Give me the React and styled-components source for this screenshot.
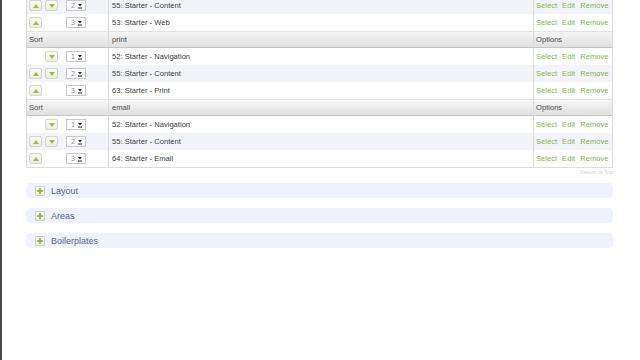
import React from "react";
import styled, { createGlobalStyle } from "styled-components";

const Global = createGlobalStyle`
  html, body { margin: 0; padding: 0; background: #fff; }
  body { font-family: "Liberation Sans", Arial, sans-serif; overflow: hidden; }
`;

const Page = styled.div`
  height: 360px;
  border-left: 2px solid #4a4a4a;
  padding-left: 24px;
  width: 587px;
  overflow: hidden;
`;

const Table = styled.div`
  margin-top: -4px;
  width: 587px;
  border: 1px solid #dcdcdc;
  box-sizing: border-box;
`;

const Row = styled.div`
  display: grid;
  grid-template-columns: 81px 425px 79px;
  height: 17px;
  background: ${(p) => (p.$alt ? "#f3f4fa" : "#fff")};
  font-size: 7.6px;
  color: #3c3c3c;
`;

const HeadRow = styled(Row)`
  background: linear-gradient(#f6f6f6, #e0e0e0);
  border-top: 1px solid #e4e4e4;
  border-bottom: 1px solid #c6c6c6;
  height: 15px;
  color: #4a4a4a;
  box-sizing: content-box;
`;

const Cell = styled.div`
  display: flex;
  align-items: center;
  gap: ${(p) => p.$gap || 0}px;
  padding-left: ${(p) => p.$pl || 3}px;
  border-left: ${(p) => (p.$divider ? "1px solid #dcdcdc" : "none")};
  white-space: nowrap;
`;

const SortCell = styled(Cell)`
  padding-left: 2px;
  gap: 3px;
`;

const ArrowBtn = styled.span`
  width: 13px;
  height: 11px;
  box-sizing: border-box;
  border: 1px solid #d6d6cc;
  border-radius: 2px;
  background: linear-gradient(#fbfbf6, #ececdf);
  display: flex;
  align-items: center;
  justify-content: center;
  visibility: ${(p) => (p.$hidden ? "hidden" : "visible")};
`;

const Picker = styled.span`
  margin-left: 5px;
  width: 20px;
  height: 11px;
  box-sizing: border-box;
  border: 1px solid #c8c8c8;
  background: #fff;
  display: flex;
  align-items: center;
  justify-content: space-between;
  padding: 0 1px 0 4px;
  font-size: 7px;
  color: #888;
`;

const DropMark = styled.span`
  width: 8px;
  height: 8px;
  display: flex;
  align-items: center;
  justify-content: center;
`;

const Action = styled.span`
  color: #8ab54e;
`;

const Under = styled.div`
  display: flex;
  justify-content: flex-end;
  font-size: 5.5px;
  color: #cfcfcf;
  height: 11px;
  padding-top: 1px;
  box-sizing: border-box;
`;

const Panels = styled.div`
  margin-top: 4px;
  display: flex;
  flex-direction: column;
  gap: 10px;
`;

const Panel = styled.div`
  height: 15px;
  border-radius: 5px;
  background: #f0f2fb;
  display: flex;
  align-items: center;
  padding-left: 9px;
  gap: 6px;
  font-size: 9px;
  color: #5465a2;
`;

const PlusBox = styled.span`
  width: 10px;
  height: 10px;
  box-sizing: border-box;
  border: 1px solid #cfcfc4;
  border-radius: 1px;
  background: linear-gradient(#fbfbf4, #ebebdc);
  display: flex;
  align-items: center;
  justify-content: center;
`;

const Tri = ({ up }) => (
  <svg width="6" height="4" viewBox="0 0 6 4">
    <polygon points={up ? "0,4 6,4 3,0" : "0,0 6,0 3,4"} fill="#9bbb52" />
  </svg>
);

const Drop = () => (
  <svg width="6" height="6" viewBox="0 0 6 6">
    <polygon points="1,1 5,1 3,3.5" fill="#222" />
    <rect x="1" y="4.5" width="4" height="1" fill="#222" />
  </svg>
);

const Plus = () => (
  <svg width="6" height="6" viewBox="0 0 6 6">
    <rect x="2.2" y="0" width="1.6" height="6" fill="#86b043" />
    <rect x="0" y="2.2" width="6" height="1.6" fill="#86b043" />
  </svg>
);

const ItemRow = ({ idx, total, name, alt }) => (
  <Row $alt={alt}>
    <SortCell>
      <ArrowBtn $hidden={idx === 1}>
        <Tri up />
      </ArrowBtn>
      <ArrowBtn $hidden={idx === total}>
        <Tri />
      </ArrowBtn>
      <Picker>
        {idx}
        <DropMark>
          <Drop />
        </DropMark>
      </Picker>
    </SortCell>
    <Cell $divider>{name}</Cell>
    <Cell $divider $gap={5} $pl={2}>
      <Action>Select</Action>
      <Action>Edit</Action>
      <Action>Remove</Action>
    </Cell>
  </Row>
);

const Header = ({ label }) => (
  <HeadRow>
    <Cell $pl={2}>Sort</Cell>
    <Cell $divider>{label}</Cell>
    <Cell $divider $pl={2}>Options</Cell>
  </HeadRow>
);

const groups = [
  { label: null, items: [[2, "55: Starter - Content"], [3, "53: Starter - Web"]], alts: [true, false] },
  {
    label: "print",
    items: [[1, "52: Starter - Navigation"], [2, "55: Starter - Content"], [3, "63: Starter - Print"]],
    alts: [false, true, false],
  },
  {
    label: "email",
    items: [[1, "52: Starter - Navigation"], [2, "55: Starter - Content"], [3, "64: Starter - Email"]],
    alts: [false, true, false],
  },
];

export default function App() {
  return (
    <>
      <Global />
      <Page>
        <Table>
          {groups.map((g, gi) => (
            <React.Fragment key={gi}>
              {g.label && <Header label={g.label} />}
              {g.items.map(([idx, name], i) => (
                <ItemRow key={i} idx={idx} total={3} name={name} alt={g.alts[i]} />
              ))}
            </React.Fragment>
          ))}
        </Table>
        <Under>Return to Top</Under>
        <Panels>
          {["Layout", "Areas", "Boilerplates"].map((t) => (
            <Panel key={t}>
              <PlusBox>
                <Plus />
              </PlusBox>
              {t}
            </Panel>
          ))}
        </Panels>
      </Page>
    </>
  );
}
